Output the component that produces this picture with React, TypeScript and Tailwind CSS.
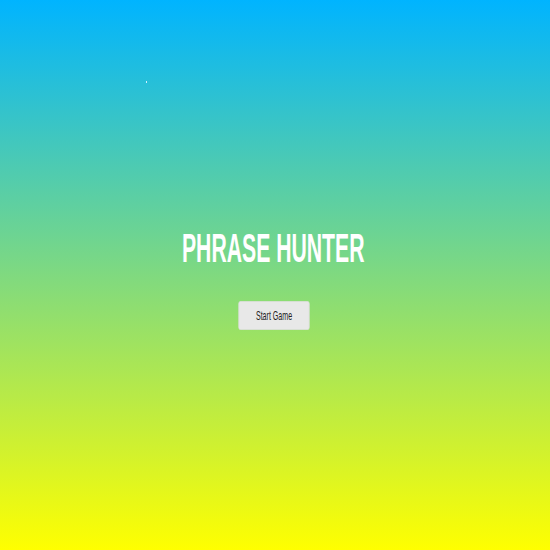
import React from "react";

export default function App() {
  return (
    <div
      className="relative flex h-[550px] w-[550px] flex-col items-center bg-[linear-gradient(to_bottom,#00b4ff,#ffff00)] pr-[3px] pt-[225px]"
      style={{ fontFamily: '"Liberation Sans", Arial, sans-serif' }}
    >
      <div className="absolute left-[146px] top-[81px] h-[2px] w-[1px] bg-[#cfefff]" />
      <h1 className="scale-x-[0.53] whitespace-nowrap text-[40px] font-bold leading-[46px] text-white">
        PHRASE HUNTER
      </h1>
      <button className="mt-[30px] flex h-[29px] w-[134px] scale-x-[0.53] items-center justify-center rounded-[3px] border border-[#dedede] bg-[#e8e8e8] text-[13.33px] text-[#222]">
        Start Game
      </button>
    </div>
  );
}
